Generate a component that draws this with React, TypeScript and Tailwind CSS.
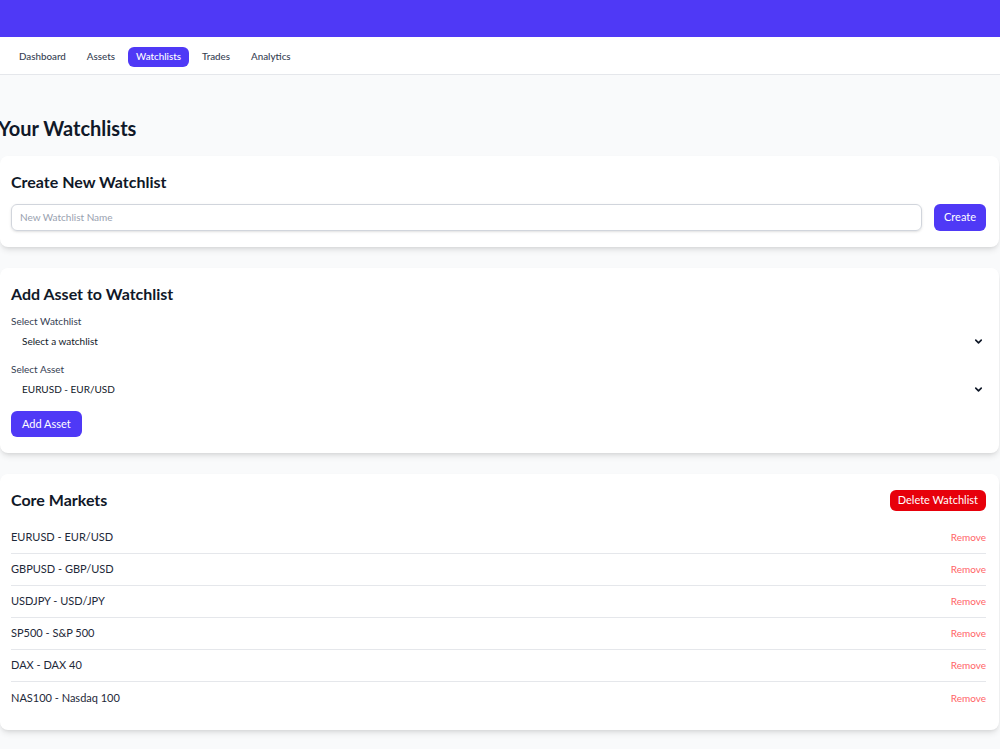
import { ChevronDown } from 'lucide-react'

const navItems = ['Dashboard', 'Assets', 'Watchlists', 'Trades', 'Analytics']

const assets = [
    'EURUSD - EUR/USD',
    'GBPUSD - GBP/USD',
    'USDJPY - USD/JPY',
    'SP500 - S&P 500',
    'DAX - DAX 40',
    'NAS100 - Nasdaq 100',
]

function FakeSelect({ label, value }: { label: string; value: string }) {
    return (
        <div>
            <div className="text-[10px] text-gray-700 leading-[14px]">{label}</div>
            <div className="flex items-center justify-between h-[26px] pl-[11px] pr-[2px] text-[10px] text-gray-900">
                <span>{value}</span>
                <ChevronDown size={11} strokeWidth={3.5} className="text-gray-900" />
            </div>
        </div>
    )
}

export default function App() {
    return (
        <div className="min-h-[749px] bg-gray-50 font-['Lato',sans-serif] text-gray-900">
            <div className="h-[37px] bg-[#4f39f6]" />
            <nav className="h-[38px] bg-white border-b border-gray-200 flex items-center gap-[5px] px-[11px] pt-[2px]">
                {navItems.map((item) => (
                    <span
                        key={item}
                        className={`px-[8px] h-[20px] flex items-center rounded-md text-[9.8px] font-medium ${item === 'Watchlists' ? 'bg-[#4f39f6] text-white' : 'text-gray-700'}`}
                    >
                        {item}
                    </span>
                ))}
            </nav>

            <main className="pt-[40px] pr-[1px] pb-6">
                <h1 className="text-[20px] font-bold leading-[26px] -ml-[2px] mb-[15px]">Your Watchlists</h1>

                <div className="space-y-[21px]">
                    <section className="bg-white rounded-lg shadow-md pl-[11px] pr-[13px] pt-[15px] pb-[16px]">
                        <h2 className="text-[16px] font-bold leading-[22px] mb-[11px]">Create New Watchlist</h2>
                        <div className="flex gap-[12px]">
                            <div className="flex-1 h-[27px] border border-gray-300 rounded-md flex items-center px-[8px] text-[10px] text-gray-400 shadow-sm">
                                New Watchlist Name
                            </div>
                            <button className="h-[27px] w-[52px] bg-[#4f39f6] text-white text-[11px] rounded-md">Create</button>
                        </div>
                    </section>

                    <section className="bg-white rounded-lg shadow-md pl-[11px] pr-[13px] pt-[15px] pb-[16px]">
                        <h2 className="text-[16px] font-bold leading-[22px] mb-[9px]">Add Asset to Watchlist</h2>
                        <div className="space-y-[8px]">
                            <FakeSelect label="Select Watchlist" value="Select a watchlist" />
                            <FakeSelect label="Select Asset" value="EURUSD - EUR/USD" />
                        </div>
                        <button className="mt-[9px] h-[26px] px-[11px] bg-[#4f39f6] text-white text-[11px] rounded-md">Add Asset</button>
                    </section>

                    <section className="bg-white rounded-lg shadow-md pl-[11px] pr-[13px] pt-[15px] pb-[16px]">
                        <div className="flex items-center justify-between mb-[11px]">
                            <h2 className="text-[16px] font-bold leading-[22px]">Core Markets</h2>
                            <button className="h-[21px] px-[8px] bg-[#e7000b] text-white text-[11px] rounded-md">Delete Watchlist</button>
                        </div>
                        <ul>
                            {assets.map((a, i) => (
                                <li
                                    key={a}
                                    className={`flex items-center justify-between h-[32px] text-[11px] ${i < assets.length - 1 ? 'border-b border-gray-200' : ''}`}
                                >
                                    <span className="text-gray-800">{a}</span>
                                    <span className="text-[10px] text-[#ff6467]">Remove</span>
                                </li>
                            ))}
                        </ul>
                    </section>
                </div>
            </main>
        </div>
    )
}
